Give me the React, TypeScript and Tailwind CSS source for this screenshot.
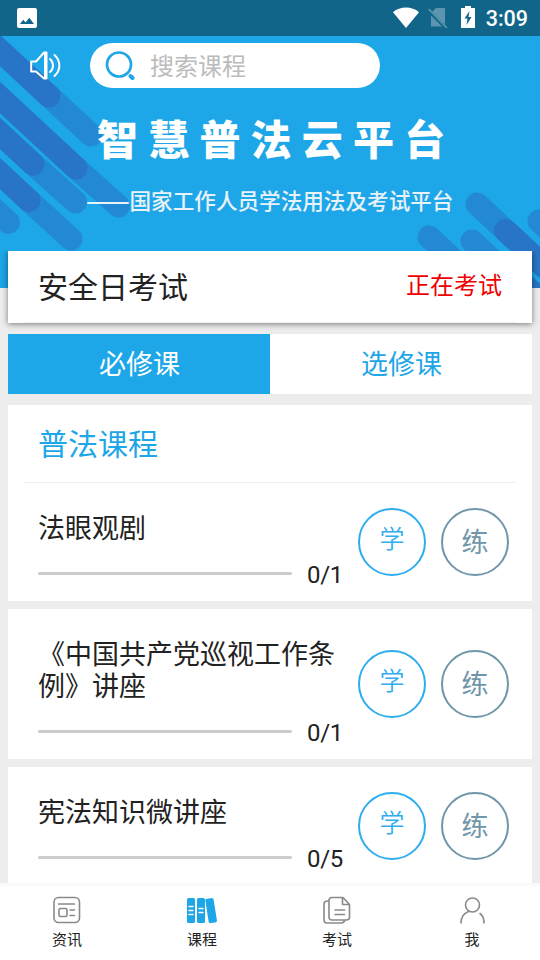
import type { ReactNode } from "react";

const courses = [
  { title: "《中国共产党巡视工作条例》讲座", progress: "0/1" },
  { title: "宪法知识微讲座", progress: "0/5" },
];

const DARK = "#2874c6";
const LIGHT = "#2389d4";

// [x1, y1, x2, y2, color]
const stripes: [number, number, number, number, string][] = [
  [49, 60, 91, 99, LIGHT],
  [-20, -4, 49, 60, DARK],
  [76, 132, 118.5, 170, LIGHT],
  [-20, 43, 76, 132, DARK],
  [33, 128, 75.5, 166, LIGHT],
  [-20, 79, 33, 128, DARK],
  [29, 164.5, 71, 203, LIGHT],
  [-20, 119, 29, 164.5, DARK],
  [-20, 160, 8.5, 186.5, LIGHT],
  [477, 168, 520, 208, LIGHT],
  [505.5, 194.5, 560, 245, DARK],
  [429, 201, 500, 267, LIGHT],
  [472, 205, 520, 250, LIGHT],
  [539, 185, 580, 223, LIGHT],
  [500, 226.5, 570, 291, DARK],
];

function StatusBar() {
  return (
    <div className="flex h-9 shrink-0 items-center bg-[#116589] pl-[17px] pr-[12px]">
      <svg width="20" height="20" viewBox="0 0 20 20" className="block">
        <rect width="20" height="20" rx="2" fill="#fff" />
        <path d="M3 16l3.2-4.2 2.4 2.8 3.7-4.8L17 16z" fill="#116589" />
      </svg>
      <div className="ml-auto flex items-center">
        <svg width="26" height="21" viewBox="0 0 26 21" className="mb-[2px]">
          <path d="M0 5.200C7 -1 19 -1 26 5.200L13 21z" fill="#fff" />
        </svg>
        <svg width="20" height="21" viewBox="0 0 20 21" className="ml-[9px]">
          <path d="M8 0h9v18.500H3V5z" fill="#5b95af" />
          <path d="M0 2l18 18" stroke="#116589" strokeWidth="3.500" />
          <path d="M.8 1l18 19" stroke="#5b95af" strokeWidth="1.800" />
        </svg>
        <svg width="14" height="22" viewBox="0 0 14 22" className="mb-[2px] ml-[13px]">
          <path d="M4 0h6v2h4v20H0V2h4z" fill="#fff" />
          <path d="M8.500 5L3.500 12.500H6.500L5.500 19L10.500 11H7.500z" fill="#116589" />
        </svg>
        <span className="ml-[11px] pt-[2px] font-['Roboto',sans-serif] text-[21.500px] font-medium leading-none text-white">3:09</span>
      </div>
    </div>
  );
}

function Hero() {
  return (
    <header className="relative h-[252px] shrink-0 overflow-hidden bg-[#1da6e8]">
      <svg className="absolute inset-0" width="540" height="252">
        {stripes.map(([x1, y1, x2, y2, color], i) => (
          <line key={i} x1={x1} y1={y1} x2={x2} y2={y2} stroke={color} strokeWidth="23" strokeLinecap="round" />
        ))}
      </svg>
      <div className="relative">
        <div className="flex items-center pl-[30px] pt-[7px]">
          <svg width="31" height="29" viewBox="0 0 31 29" fill="none" stroke="#fff" strokeWidth="2" strokeLinecap="round" strokeLinejoin="round">
            <path d="M1.200 10.500H6L14 1.500h2.500v26H14L6 20.500H1.200z" />
            <path d="M15 2v25" />
            <path d="M20 8c4 3.500 4 9.500 0 13M24.500 4c6.500 6 6.500 15 0 21" />
          </svg>
          <div className="ml-[29px] flex h-[45px] w-[290px] items-center rounded-full bg-white pl-[15px]">
            <svg width="30" height="30" viewBox="0 0 30 30" fill="none" stroke="#1da6e8">
              <circle cx="14" cy="13.500" r="12" strokeWidth="2.700" />
              <path d="M25.500 25l2 2" strokeWidth="4" strokeLinecap="round" />
            </svg>
            <span className="mb-[2px] ml-[15px] text-[24px] leading-none text-[#bbb]">搜索课程</span>
          </div>
        </div>
        <h1 className="mt-[29px] whitespace-nowrap pl-[97px] text-[41px] font-black leading-[40px] tracking-[10.200px] text-white">
          智慧普法云平台
        </h1>
        <p className="mt-[32px] flex whitespace-nowrap pl-[86px] text-[21.600px] font-medium leading-[22px] text-[#e8f2f9]">
          <span className="w-[43.500px] text-[26px] leading-[20px]">——</span>
          国家工作人员学法用法及考试平台
        </p>
      </div>
    </header>
  );
}

function RoundButtons() {
  return (
    <div className="-mt-4 flex gap-[15px]">
      <button className="flex size-[68px] justify-center rounded-full border-2 border-[#30adef] pt-[15px] text-[25px] font-[350] leading-[25px] text-[#30adef]">
        学
      </button>
      <button className="flex size-[68px] justify-center rounded-full border-2 border-[#7096a9] pt-[17px] text-[27px] leading-[27px] text-[#7096a9]">
        练
      </button>
    </div>
  );
}

function CourseRow({ title, progress }: { title: string; progress: string }) {
  return (
    <div className="flex items-center justify-between pl-[30px] pr-[23px]">
      <div className="w-[310px]">
        <h3 className="text-[27px] leading-8 text-[#222]">{title}</h3>
        <div className="mt-[18px] flex items-start">
          <div className="mt-[11px] h-[3px] w-[254px] rounded-full bg-[#ccc]" />
          <span className="ml-[15px] font-['Roboto',sans-serif] text-[24px] leading-[28px] tracking-[-0.300px] text-[#222]">{progress}</span>
        </div>
      </div>
      <RoundButtons />
    </div>
  );
}

function NavItem({ label, children }: { label: string; children: ReactNode }) {
  return (
    <button className="flex flex-1 flex-col items-center pr-px pt-[9px] text-[15px] leading-[20px] text-[#222]">
      <svg width="32" height="30" viewBox="0 0 32 30" fill="none" stroke="#8a8a8a" strokeWidth="1.600" strokeLinecap="round" strokeLinejoin="round">
        {children}
      </svg>
      <span className="mt-[4px]">{label}</span>
    </button>
  );
}

export default function App() {
  return (
    <div className="flex h-[960px] w-[540px] flex-col overflow-hidden bg-[#ededed] font-['Noto_Sans_CJK_SC',sans-serif]">
      <StatusBar />
      <Hero />
      <main className="relative -mt-[37px] flex min-h-0 flex-1 flex-col overflow-hidden px-2">
        <section className="h-[72px] shrink-0 bg-white shadow-[0_1px_6px_rgba(0,0,0,0.5)]">
          <div className="mx-[15px] flex h-full items-center justify-between border-b border-[#eee] px-[15px]">
            <h2 className="mb-[3px] text-[30px] leading-none text-[#222]">安全日考试</h2>
            <span className="mb-[5px] text-[24px] leading-none text-[#f00000]">正在考试</span>
          </div>
        </section>
        <div className="mt-[11px] flex h-[60px] shrink-0 text-[27px]">
          <button className="flex-1 bg-[#1da6e8] pb-[2px] pl-px text-white">必修课</button>
          <button className="flex-1 bg-white pb-[2px] pl-px text-[#1da6e8]">选修课</button>
        </div>
        <section className="mt-[11px] h-[196px] shrink-0 bg-white">
          <div className="mx-4 h-[78px] border-b border-[#eee] pl-[14px] text-[30px] leading-[75px] text-[#1da6e8]">普法课程</div>
          <div className="pt-[28px]">
            <CourseRow title="法眼观剧" progress="0/1" />
          </div>
        </section>
        {courses.map((course) => (
          <section key={course.title} className="mt-2 shrink-0 bg-white pb-[12px] pt-[28px]">
            <CourseRow title={course.title} progress={course.progress} />
          </section>
        ))}
      </main>
      <nav className="flex h-[77px] shrink-0 border-t-[3px] border-[#fafafa] bg-white">
        <NavItem label="资讯">
          <rect x="3" y="2.500" width="25.500" height="25" rx="4.500" />
          <path d="M7.500 9h16M19 15h4.500M19 20.500h4.500" />
          <rect x="8" y="13.500" width="8" height="8" rx="1.500" />
        </NavItem>
        <NavItem label="课程">
          <g fill="#1da6e8" stroke="none">
            <rect x="1" y="3" width="8" height="25" rx="1.500" />
            <rect x="11" y="3" width="8" height="25" rx="1.500" />
            <path d="M20 4l6-1 1.500 1L31 26l-1 1.300-6 .9-1.300-1L19.300 5z" />
          </g>
          <path d="M3 11.500h4M3 15.500h4M3 19.500h4M13 13.500h4M13 17.500h4" stroke="#fff" strokeWidth="1.300" />
        </NavItem>
        <NavItem label="考试">
          <path d="M11 2.500h11l6.500 7v12.500q0 3-3 3H11q-3 0-3-3v-16.500q0-3 3-3zM21.500 3v6.500h6.500M14 15h9.500M14 19.500h9.500M7 6q-4 0-4 3v15.500q0 3.500 3 3.500h14q3 0 4-3" />
        </NavItem>
        <NavItem label="我">
          <circle cx="16.500" cy="10" r="7" />
          <path d="M5 28C5 21.500 8.500 18 12.500 16.500M24 18.500Q28 21.500 28 28" />
        </NavItem>
      </nav>
    </div>
  );
}
